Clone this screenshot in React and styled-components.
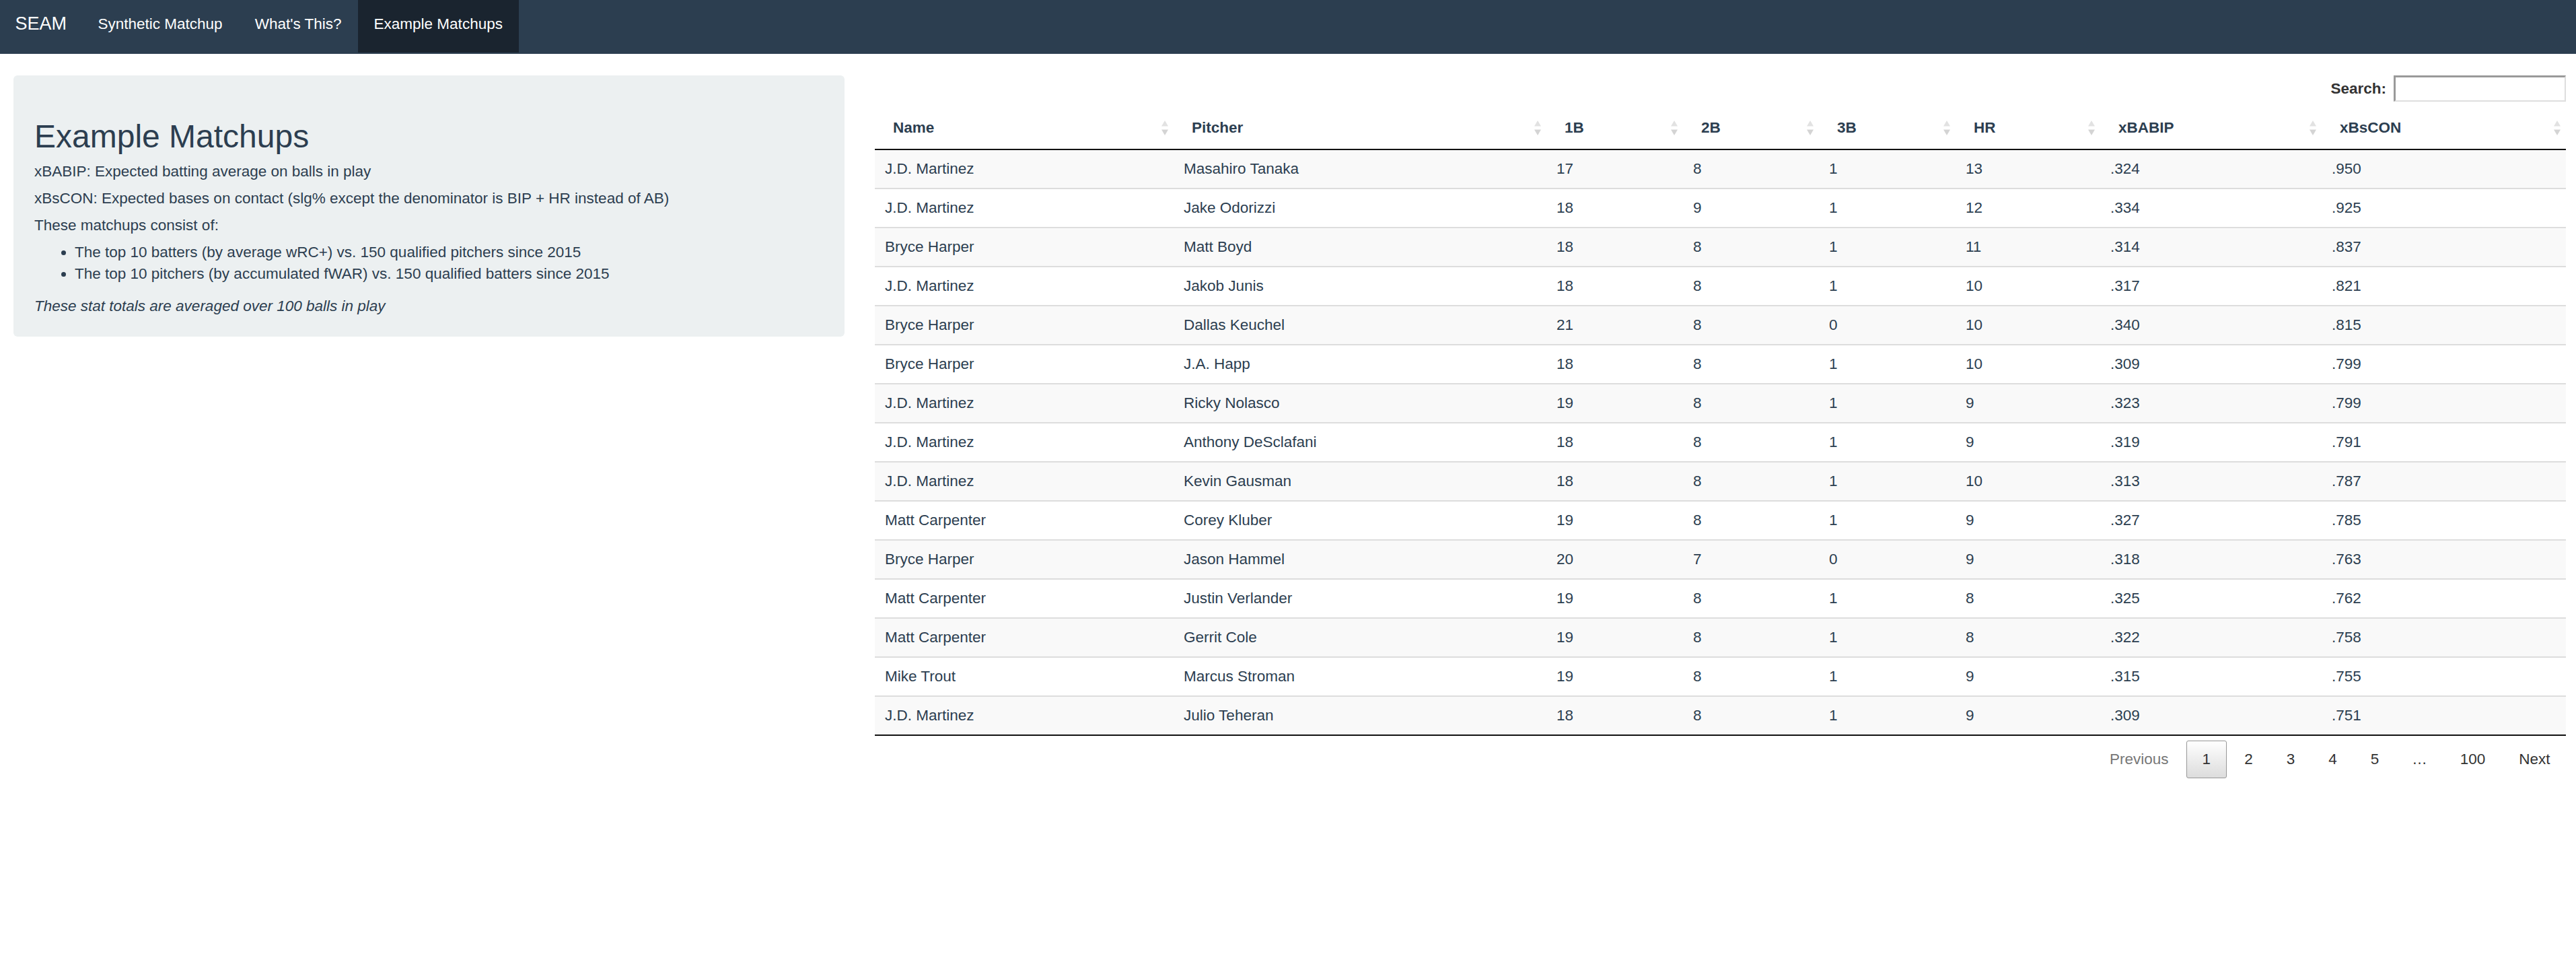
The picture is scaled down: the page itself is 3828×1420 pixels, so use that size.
import React from "react";
import styled, { createGlobalStyle, css } from "styled-components";

const GlobalStyle = createGlobalStyle`
  html, body {
    margin: 0;
    padding: 0;
    background: #ffffff;
  }
  body {
    font-family: "Liberation Sans", Arial, Helvetica, sans-serif;
    font-size: 22.5px;
    line-height: 32px;
    color: #2c3e50;
  }
  * {
    box-sizing: border-box;
  }
`;

const navItems = [
  { label: "Synthetic Matchup" },
  { label: "What's This?" },
  { label: "Example Matchups", active: true },
];

const columns = [
  { title: "Name", width: 444 },
  { title: "Pitcher", width: 554 },
  { title: "1B", width: 203 },
  { title: "2B", width: 202 },
  { title: "3B", width: 203 },
  { title: "HR", width: 215 },
  { title: "xBABIP", width: 329 },
  { title: "xBsCON" },
];

const matchups = [
  ["J.D. Martinez", "Masahiro Tanaka", "17", "8", "1", "13", ".324", ".950"],
  ["J.D. Martinez", "Jake Odorizzi", "18", "9", "1", "12", ".334", ".925"],
  ["Bryce Harper", "Matt Boyd", "18", "8", "1", "11", ".314", ".837"],
  ["J.D. Martinez", "Jakob Junis", "18", "8", "1", "10", ".317", ".821"],
  ["Bryce Harper", "Dallas Keuchel", "21", "8", "0", "10", ".340", ".815"],
  ["Bryce Harper", "J.A. Happ", "18", "8", "1", "10", ".309", ".799"],
  ["J.D. Martinez", "Ricky Nolasco", "19", "8", "1", "9", ".323", ".799"],
  ["J.D. Martinez", "Anthony DeSclafani", "18", "8", "1", "9", ".319", ".791"],
  ["J.D. Martinez", "Kevin Gausman", "18", "8", "1", "10", ".313", ".787"],
  ["Matt Carpenter", "Corey Kluber", "19", "8", "1", "9", ".327", ".785"],
  ["Bryce Harper", "Jason Hammel", "20", "7", "0", "9", ".318", ".763"],
  ["Matt Carpenter", "Justin Verlander", "19", "8", "1", "8", ".325", ".762"],
  ["Matt Carpenter", "Gerrit Cole", "19", "8", "1", "8", ".322", ".758"],
  ["Mike Trout", "Marcus Stroman", "19", "8", "1", "9", ".315", ".755"],
  ["J.D. Martinez", "Julio Teheran", "18", "8", "1", "9", ".309", ".751"],
];

const pages = ["1", "2", "3", "4", "5", "…", "100"];

const SortIcon = () => (
  <SortSvg width="12" height="24" viewBox="0 0 12 24">
    <polygon points="6,1 1,9.5 11,9.5" fill="#e2e2e2" />
    <polygon points="1,14.5 11,14.5 6,23" fill="#d4d4d4" />
  </SortSvg>
);

const App = () => {
  return (
    <>
      <GlobalStyle />
      <Navbar>
        <Brand>SEAM</Brand>
        {navItems.map((item) => (
          <NavLink key={item.label} $active={item.active}>
            {item.label}
          </NavLink>
        ))}
      </Navbar>

      <Main>
        <Well>
          <Title>Example Matchups</Title>
          <Para>xBABIP: Expected batting average on balls in play</Para>
          <Para>
            xBsCON: Expected bases on contact (slg% except the denominator is
            BIP + HR instead of AB)
          </Para>
          <Para>These matchups consist of:</Para>
          <List>
            <Item>
              The top 10 batters (by average wRC+) vs. 150 qualified pitchers
              since 2015
            </Item>
            <Item>
              The top 10 pitchers (by accumulated fWAR) vs. 150 qualified
              batters since 2015
            </Item>
          </List>
          <Para>
            <em>These stat totals are averaged over 100 balls in play</em>
          </Para>
        </Well>

        <TableWrap>
          <FilterBar>
            <FilterLabel>
              Search:
              <SearchInput type="search" />
            </FilterLabel>
          </FilterBar>

          <Table>
            <colgroup>
              {columns.map((col) => (
                <col
                  key={col.title}
                  style={col.width ? { width: col.width } : undefined}
                />
              ))}
            </colgroup>
            <thead>
              <tr>
                {columns.map((col) => (
                  <HeadCell key={col.title}>
                    <HeadInner>
                      <span>{col.title}</span>
                      <SortIcon />
                    </HeadInner>
                  </HeadCell>
                ))}
              </tr>
            </thead>
            <tbody>
              {matchups.map((row, i) => (
                <Row key={i}>
                  {row.map((value, j) => (
                    <Cell key={j}>{value}</Cell>
                  ))}
                </Row>
              ))}
            </tbody>
          </Table>

          <Pager>
            <PageButton $disabled>Previous</PageButton>
            {pages.map((p) =>
              p === "…" ? (
                <Ellipsis key={p}>…</Ellipsis>
              ) : (
                <PageButton key={p} $current={p === "1"}>
                  {p}
                </PageButton>
              )
            )}
            <PageButton>Next</PageButton>
          </Pager>
        </TableWrap>
      </Main>
    </>
  );
};

export default App;

const Navbar = styled.nav`
  display: flex;
  align-items: flex-start;
  height: 80px;
  background-color: #2c3e50;
`;

const Brand = styled.div`
  padding: 19px 22.5px 0;
  font-size: 27px;
  line-height: 32px;
  color: #ffffff;
`;

const NavLink = styled.div`
  padding: 20px 24px 26px;
  font-size: 22.5px;
  line-height: 32px;
  color: #ffffff;
  ${(p) =>
    p.$active &&
    css`
      background-color: #1a242f;
    `}
`;

const Main = styled.main`
  display: grid;
  grid-template-columns: 1235px 1fr;
  column-gap: 45px;
  align-items: start;
  padding: 32px 15px 40px 20px;
`;

const Well = styled.section`
  background-color: #ecf0f1;
  border-radius: 6px;
  padding: 28px 32px 21px 31px;
`;

const Title = styled.h2`
  margin: 37px 0 9px;
  font-size: 48px;
  font-weight: 400;
  line-height: 1.1;
  color: #2c3e50;
`;

const Para = styled.p`
  margin: 0 0 8px;
  line-height: 32px;
`;

const List = styled.ul`
  margin: 8px 0 16px;
  padding-left: 60px;
`;

const Item = styled.li`
  line-height: 32px;
`;

const TableWrap = styled.section`
  display: flex;
  flex-direction: column;
`;

const FilterBar = styled.div`
  display: flex;
  justify-content: flex-end;
  height: 39px;
  margin-bottom: 8px;
`;

const FilterLabel = styled.label`
  display: flex;
  align-items: center;
  font-weight: bold;
  color: #333333;
`;

const SearchInput = styled.input`
  width: 256px;
  height: 39px;
  margin-left: 11px;
  padding: 4px 6px;
  font: inherit;
  background: #ffffff;
  border-top: 3px solid #9a9a9a;
  border-left: 3px solid #9a9a9a;
  border-right: 2px solid #dedede;
  border-bottom: 2px solid #dedede;
  outline: none;
`;

const Table = styled.table`
  width: 100%;
  table-layout: fixed;
  border-collapse: separate;
  border-spacing: 0;
  border-bottom: 2px solid #111111;
`;

const HeadCell = styled.th`
  padding: 15px 7px 15px 27px;
  border-bottom: 2px solid #111111;
  font-weight: bold;
  text-align: left;
  line-height: 32px;
  color: #2c3e50;
`;

const HeadInner = styled.div`
  display: flex;
  align-items: center;
  justify-content: space-between;
`;

const SortSvg = styled.svg`
  flex-shrink: 0;
  display: block;
`;

const Row = styled.tr`
  &:nth-child(odd) td {
    background-color: #f9f9f9;
  }
  &:first-child td {
    border-top: none;
  }
`;

const Cell = styled.td`
  padding: 12px 15px;
  border-top: 2px solid #dddddd;
  line-height: 32px;
  color: #2c3e50;
  white-space: nowrap;
`;

const Pager = styled.div`
  display: flex;
  justify-content: flex-end;
  padding-top: 7px;
`;

const PageButton = styled.span`
  min-width: 34px;
  margin-left: 3px;
  padding: 11px 22.5px;
  border: 1px solid transparent;
  border-radius: 3px;
  line-height: 32px;
  text-align: center;
  color: #333333;
  ${(p) =>
    p.$current &&
    css`
      border-color: #979797;
      background: linear-gradient(to bottom, #ffffff 0%, #dcdcdc 100%);
    `}
  ${(p) =>
    p.$disabled &&
    css`
      color: #777777;
    `}
`;

const Ellipsis = styled.span`
  margin-left: 3px;
  padding: 12px 22.5px;
  line-height: 32px;
  color: #333333;
`;
